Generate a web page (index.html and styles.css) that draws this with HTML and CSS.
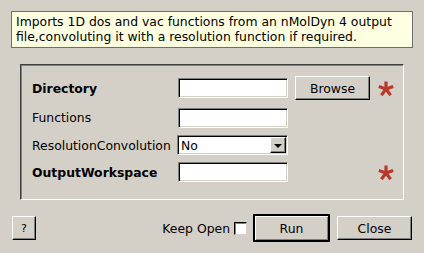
FILE: index.html
```html
<!DOCTYPE html>
<html lang="en">
<head>
    <meta charset="UTF-8">
    <title>LoadNMoldyn4Ascii1D</title>
    <link rel="stylesheet" href="styles.css">
</head>
<body>

    <div class="descripcion">
        Imports 1D dos and vac functions from an nMolDyn 4 output<br>file,convoluting it with a resolution function if required.
    </div>

    <div class="grupo">
        <span class="etiqueta negrita">Directory</span>
        <span class="caja"></span>
        <button class="boton">Browse</button>
        <svg class="asterisco" width="18" height="15" viewBox="0 0 18 15">
            <g stroke="#b8392c" stroke-width="3.2">
                <line x1="9" y1="8" x2="9" y2="0.5"/>
                <line x1="9" y1="8" x2="16.2" y2="5.6"/>
                <line x1="9" y1="8" x2="13.6" y2="14.2"/>
                <line x1="9" y1="8" x2="4.4" y2="14.2"/>
                <line x1="9" y1="8" x2="1.8" y2="5.6"/>
            </g>
        </svg>

        <span class="etiqueta">Functions</span>
        <span class="caja"></span>
        <span></span>
        <span></span>

        <span class="etiqueta">ResolutionConvolution</span>
        <div class="caja combo">
            <span class="valor">No</span>
            <span class="flecha"></span>
        </div>
        <span></span>
        <span></span>

        <span class="etiqueta negrita">OutputWorkspace</span>
        <span class="caja"></span>
        <span></span>
        <svg class="asterisco" width="18" height="15" viewBox="0 0 18 15">
            <g stroke="#b8392c" stroke-width="3.2">
                <line x1="9" y1="8" x2="9" y2="0.5"/>
                <line x1="9" y1="8" x2="16.2" y2="5.6"/>
                <line x1="9" y1="8" x2="13.6" y2="14.2"/>
                <line x1="9" y1="8" x2="4.4" y2="14.2"/>
                <line x1="9" y1="8" x2="1.8" y2="5.6"/>
            </g>
        </svg>
    </div>

    <div class="pie">
        <button class="boton ayuda">?</button>
        <span class="hueco"></span>
        <span class="mantener">Keep Open</span>
        <span class="check"></span>
        <button class="boton run">Run</button>
        <button class="boton close">Close</button>
    </div>

</body>
</html>
```

FILE: styles.css
```css
body{
    margin: 0;
    background-color: #d4d0c8;
    font-family: "DejaVu Sans", sans-serif;
    font-size: 12.4px;
    color: #000;
}

.descripcion{
    margin: 11px 11px 0 11px;
    padding: 2px 4px 3px 4px;
    line-height: 15px;
    background-color: #ffffe1;
    border: 1px solid #6e6e6e;
    white-space: nowrap;
}

.grupo{
    margin: 16px 20px 0 20px;
    padding: 11px 0 17px 11px;
    border: 1px solid;
    border-color: #404040 #fff #fff #404040;
    box-shadow: inset 1px 1px #808080;
    display: grid;
    grid-template-columns: 139px 110px 75px 18px;
    grid-template-rows: 24px 21px 20px 20px;
    column-gap: 7px;
    row-gap: 7px;
    align-items: center;
}

.etiqueta{
    white-space: nowrap;
}

.negrita{
    font-weight: bold;
}

.caja{
    display: block;
    height: 20px;
    box-sizing: border-box;
    background-color: #fff;
    border: 1px solid;
    border-color: #808080 #fff #fff #808080;
    box-shadow: inset 1px 1px #000, inset -1px -1px #d4d0c8;
}

.combo{
    display: flex;
    align-items: center;
    padding: 1px;
    margin-left: -1px;
}

.valor{
    flex: 1;
    padding-left: 2px;
}

.flecha{
    width: 16px;
    height: 16px;
    box-sizing: border-box;
    background-color: #d4d0c8;
    border: 1px solid;
    border-color: #fff #000 #000 #fff;
    box-shadow: inset -1px -1px #808080;
    display: flex;
    align-items: center;
    justify-content: center;
}

.flecha::after{
    content: "";
    border-left: 4px solid transparent;
    border-right: 4px solid transparent;
    border-top: 4px solid #000;
    margin-top: 1px;
}

.boton{
    height: 24px;
    box-sizing: border-box;
    background-color: #d4d0c8;
    border: 1px solid;
    border-color: #fff #000 #000 #fff;
    box-shadow: inset -1px -1px #808080;
    font-family: "DejaVu Sans", sans-serif;
    font-size: 12.4px;
    color: #000;
    padding: 0;
}

.asterisco{
    display: block;
}

.pie{
    margin-top: 14px;
    padding: 0 12px;
    display: flex;
    align-items: center;
    height: 28px;
}

.ayuda{
    width: 24px;
    font-size: 11px;
}

.hueco{
    flex: 1;
}

.mantener{
    margin-right: 4px;
}

.check{
    width: 13px;
    height: 13px;
    box-sizing: border-box;
    background-color: #fff;
    border: 1px solid;
    border-color: #000 #d4d0c8 #d4d0c8 #000;
    box-shadow: inset 1px 1px #808080;
    margin-right: 6px;
}

.run{
    width: 77px;
    height: 28px;
    border: 2px solid #000;
    box-shadow: inset 1px 1px #fff, inset -1px -1px #808080;
    margin-right: 7px;
}

.close{
    width: 75px;
}
```
